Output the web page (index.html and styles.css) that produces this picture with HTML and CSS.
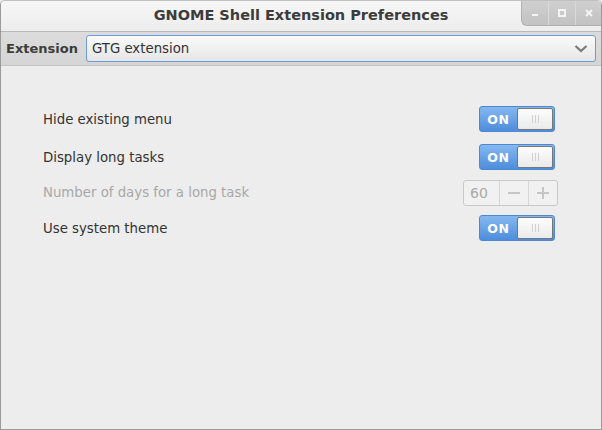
FILE: index.html
```html
<!DOCTYPE html>
<html>
<head>
<meta charset="utf-8">
<link rel="stylesheet" href="styles.css">
</head>
<body>
<div class="window">
  <div class="titlebar">
    <div class="title">GNOME Shell Extension Preferences</div>
    <div class="wm-buttons">
      <div class="wm-btn"><svg width="10" height="10" viewBox="0 0 10 10"><rect x="2" y="6" width="6" height="2" fill="#f4f4f4"/></svg></div>
      <div class="wm-btn"><svg width="10" height="10" viewBox="0 0 10 10"><rect x="2" y="2" width="6" height="6" fill="none" stroke="#f4f4f4" stroke-width="2"/></svg></div>
      <div class="wm-btn"><svg width="10" height="10" viewBox="0 0 10 10"><path d="M2 2 L8 8 M8 2 L2 8" stroke="#f4f4f4" stroke-width="2"/></svg></div>
    </div>
  </div>
  <div class="toolbar">
    <span class="tb-label">Extension</span>
    <div class="combo">
      <span class="combo-text">GTG extension</span>
      <svg class="chev" width="14" height="10" viewBox="0 0 14 10"><path d="M1.5 2 L7 7 L12.5 2" fill="none" stroke="#7a7a7a" stroke-width="2.2"/></svg>
    </div>
  </div>
  <div class="content">
    <div class="row">
      <span class="label">Hide existing menu</span>
      <div class="switch"><span class="on">ON</span><span class="knob"><i></i><i></i><i></i></span></div>
    </div>
    <div class="row">
      <span class="label">Display long tasks</span>
      <div class="switch"><span class="on">ON</span><span class="knob"><i></i><i></i><i></i></span></div>
    </div>
    <div class="row short">
      <span class="label disabled">Number of days for a long task</span>
      <div class="spin">
        <span class="spin-val">60</span>
        <span class="spin-btn"><svg width="12" height="12" viewBox="0 0 12 12"><rect x="0" y="5" width="12" height="2" fill="#c6c6c6"/></svg></span>
        <span class="spin-btn"><svg width="12" height="12" viewBox="0 0 12 12"><rect x="0" y="5" width="12" height="2" fill="#c6c6c6"/><rect x="5" y="0" width="2" height="12" fill="#c6c6c6"/></svg></span>
      </div>
    </div>
    <div class="row">
      <span class="label">Use system theme</span>
      <div class="switch"><span class="on">ON</span><span class="knob"><i></i><i></i><i></i></span></div>
    </div>
  </div>
</div>
</body>
</html>
```
FILE: styles.css
```css
html, body {
  margin: 0;
  padding: 0;
  background: #ededed;
}
body {
  font-family: "DejaVu Sans", "Liberation Sans", sans-serif;
  color: #3c3c3c;
}
.window {
  width: 602px;
  height: 430px;
  box-sizing: border-box;
  border: 1px solid #9a9a9a;
  border-top-color: #c0c0c0;
  border-radius: 5px 5px 0 0;
  background: #ededed;
  display: flex;
  flex-direction: column;
  overflow: hidden;
}
.titlebar {
  position: relative;
  height: 30px;
  flex: none;
  background: linear-gradient(#f7f7f7, #ededed);
  border-bottom: 1px solid #b9b9b9;
  display: flex;
  align-items: center;
  justify-content: center;
}
.title {
  font-weight: bold;
  font-size: 14.5px;
  color: #3c3c3c;
  margin-top: -3px;
}
.wm-buttons {
  position: absolute;
  top: -1px;
  right: -1px;
  height: 25px;
  display: flex;
  background: linear-gradient(#d0d0d0, #c2c2c2);
  border: 1px solid #b0b0b0;
  border-top: none;
  border-right: none;
  border-radius: 0 0 0 6px;
}
.wm-btn {
  width: 26px;
  display: flex;
  align-items: center;
  justify-content: center;
  border-left: 1px solid #dadada;
}
.wm-btn:first-child {
  border-left: none;
}
.toolbar {
  height: 33px;
  flex: none;
  background: linear-gradient(#dcdcdc, #d5d5d5);
  border-bottom: 1px solid #c4c4c4;
  display: flex;
  align-items: center;
  padding: 0 5px 0 5px;
  gap: 8px;
}
.tb-label {
  font-weight: bold;
  font-size: 13px;
  color: #3c3c3c;
}
.combo {
  flex: 1;
  height: 25px;
  border: 1px solid #6d9bd7;
  border-radius: 3px;
  background: linear-gradient(#fafafa, #e6e6e6);
  display: flex;
  align-items: center;
  justify-content: space-between;
  padding: 0 7px 0 5px;
}
.combo-text {
  font-size: 13.3px;
  color: #333;
}
.content {
  padding: 37px 46px 0 42px;
  display: flex;
  flex-direction: column;
  gap: 6px;
}
.row {
  height: 32px;
  display: flex;
  align-items: center;
  justify-content: space-between;
}
.row.short {
  height: 27px;
  margin-right: -3px;
}
.label {
  font-size: 13.3px;
  color: #333;
}
.label.disabled {
  color: #a8a8a8;
}
.switch {
  width: 76px;
  height: 26px;
  box-sizing: border-box;
  display: flex;
  border-radius: 3px;
  border: 1px solid #4e88d0;
  background: linear-gradient(#86b8f0, #4d8ddc);
  overflow: hidden;
}
.on {
  width: 37px;
  display: flex;
  align-items: center;
  justify-content: center;
  color: #fff;
  font-weight: bold;
  font-size: 12.5px;
  letter-spacing: 0.8px;
}
.knob {
  flex: 1;
  margin: 1px 1px 1px 0;
  border: 1px solid #777;
  border-radius: 2px;
  background: linear-gradient(#fdfdfd, #eaeaea);
  display: flex;
  align-items: center;
  justify-content: center;
  gap: 2px;
}
.knob i {
  display: block;
  width: 1px;
  height: 8px;
  background: #d0d0d0;
}
.spin {
  width: 95px;
  height: 26px;
  box-sizing: border-box;
  border: 1px solid #c9c9c9;
  border-radius: 3px;
  background: #f1f1f1;
  display: flex;
}
.spin-val {
  flex: 1;
  font-size: 14px;
  color: #a9a9a9;
  display: flex;
  align-items: center;
  padding-left: 6px;
}
.spin-btn {
  width: 28px;
  border-left: 1px solid #d6d6d6;
  display: flex;
  align-items: center;
  justify-content: center;
}
```
